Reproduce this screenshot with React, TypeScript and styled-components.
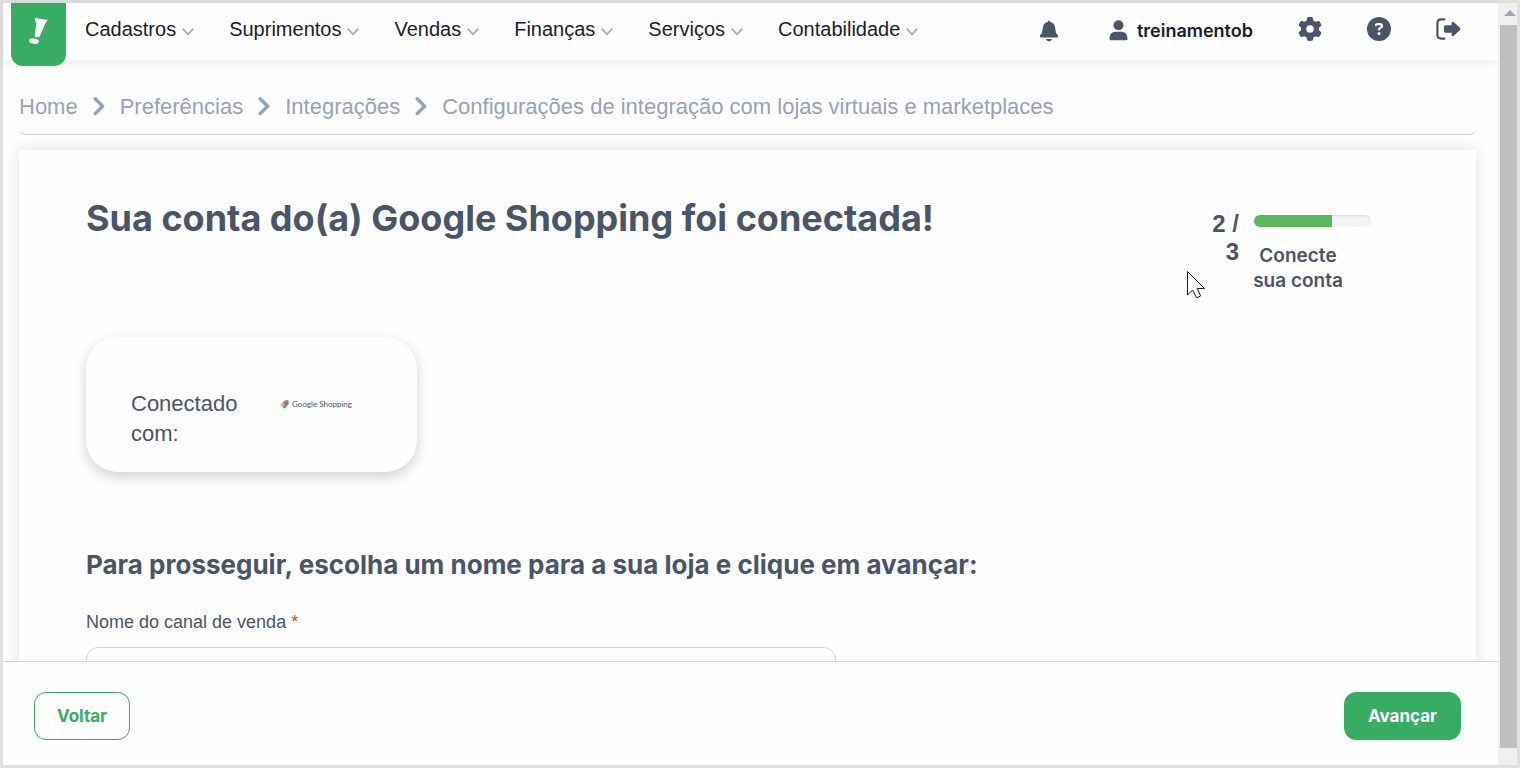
import React from 'react';
import styled, { createGlobalStyle } from 'styled-components';
import { FaGear, FaCircleQuestion } from 'react-icons/fa6';

const sans = '"Liberation Sans", Arial, sans-serif';
const display = 'Inter, "Open Sans", sans-serif';
const slate = '#4a5568';
const green = '#36ad62';

const GlobalStyle = createGlobalStyle`
  *, *::before, *::after { box-sizing: border-box; }
  body { margin: 0; background: #e0e0e0; font-family: ${sans}; color: ${slate}; }
  button, input { font: inherit; }
  h1, h2, p, ul, ol { margin: 0; padding: 0; }
  ul, ol { list-style: none; }
  a { color: inherit; text-decoration: none; }
`;

const Frame = styled.div`
  display: flex;
  height: 100vh;
  padding: 3px;
`;

const Page = styled.div`
  flex: 1;
  min-width: 0;
  display: flex;
  flex-direction: column;
  background: #fefefe;
`;

const TopBar = styled.header`
  display: flex;
  align-items: flex-start;
  flex: none;
  height: 57px;
  padding: 0 37px 0 8px;
  background: #fefefe;
  box-shadow: 0 2px 10px rgba(74, 85, 104, 0.12);
`;

const Logo = styled.a`
  display: flex;
  flex: none;
  justify-content: center;
  width: 55px;
  height: 63px;
  padding-top: 14px;
  border-radius: 0 0 12px 12px;
  background: ${green};
`;

const Menu = styled.ul`
  display: flex;
  gap: 35px;
  margin-left: 19px;
`;

const MenuButton = styled.button`
  display: flex;
  align-items: center;
  gap: 6px;
  height: 52px;
  padding: 0;
  border: 0;
  background: none;
  color: #1a202c;
  font-size: 20px;
  line-height: 24px;
  white-space: nowrap;

  svg { margin-top: 5px; }
`;

const Tools = styled.div`
  display: flex;
  align-items: center;
  gap: 45px;
  height: 52px;
  margin-left: auto;
`;

const ToolButton = styled.button`
  display: flex;
  align-items: center;
  gap: 9px;
  padding: 0;
  border: 0;
  background: none;
  color: ${slate};
`;

const AccountTools = styled.div`
  display: flex;
  align-items: center;
  gap: 50px;
  padding-top: 3px;
`;

const UserName = styled.span`
  color: #1a202c;
  font-family: ${display};
  font-size: 18px;
  font-weight: 600;
  line-height: 24px;
`;

const Content = styled.main`
  flex: 1;
  min-height: 0;
  overflow: hidden;
  padding: 19px 22px 0 16px;
`;

const Crumbs = styled.ol`
  display: flex;
  align-items: center;
  height: 56px;
  gap: 15px;
  border-bottom: 1px solid #cbd5e0;
  border-radius: 6px;
  color: #94a3b8;
  font-size: 22px;
  line-height: 28px;
  white-space: nowrap;
`;

const Crumb = styled.li`
  display: flex;
  align-items: center;
  gap: 15px;
`;

const Card = styled.section`
  margin-top: 15px;
  min-height: 100%;
  padding: 44px 105px 0 67px;
  background: #fefefe;
  box-shadow: 0 0 14px rgba(60, 70, 70, 0.16);
`;

const CardHead = styled.div`
  display: flex;
  justify-content: space-between;
`;

const Title = styled.h1`
  font-family: ${display};
  font-size: 36px;
  font-weight: 700;
  line-height: 48px;
`;

const Progress = styled.div`
  position: relative;
  display: flex;
  gap: 15px;
  padding-top: 16px;
`;

const StepCount = styled.p`
  width: 32px;
  font-size: 24px;
  font-weight: 700;
  line-height: 28px;
  text-align: right;
`;

const StepInfo = styled.div`
  width: 117px;
  padding-top: 5px;
`;

const Bar = styled.div`
  height: 12px;
  overflow: hidden;
  border-radius: 6px;
  background: #f3f4f4;
  box-shadow: inset 0 1px 2px rgba(0, 0, 0, 0.1);
`;

const BarFill = styled.div`
  height: 100%;
  background: #5cb85c;
`;

const StepLabel = styled.p`
  width: 96px;
  margin: 16px 0 0 -4px;
  font-family: ${display};
  font-size: 19px;
  font-weight: 600;
  line-height: 25px;
  text-align: center;
`;

const Cursor = styled.svg`
  position: absolute;
  left: -20px;
  top: 77px;
`;

const Connected = styled.div`
  display: flex;
  align-items: flex-start;
  justify-content: space-between;
  width: 331px;
  height: 135px;
  margin-top: 44px;
  padding: 52px 65px 0 45px;
  border-radius: 32px;
  background: #fefefe;
  box-shadow: 0 5px 14px rgba(0, 0, 0, 0.18);
  font-size: 22px;
  line-height: 30px;

  p { width: 110px; }
`;

const Brand = styled.span`
  display: flex;
  align-items: center;
  gap: 3px;
  margin-top: 10px;
  font-family: Lato, ${display};
  font-size: 8px;
  line-height: 10px;
  white-space: nowrap;
`;

const Subtitle = styled.h2`
  margin-top: 77px;
  font-family: ${display};
  font-size: 26px;
  font-weight: 700;
  line-height: 32px;
`;

const Field = styled.label`
  display: block;
  width: 750px;
  margin-top: 31px;
  font-size: 18px;
  line-height: 20px;

  em { color: #c05621; font-style: normal; }
`;

const TextInput = styled.input`
  display: block;
  width: 100%;
  height: 48px;
  margin-top: 15px;
  padding: 0 16px;
  border: 1px solid #cbd5e0;
  border-radius: 12px;
  background: #fefefe;
`;

const Footer = styled.footer`
  display: flex;
  flex: none;
  align-items: center;
  justify-content: space-between;
  padding: 30px 37px 25px 31px;
  border-top: 1px solid #d6d8da;
  background: #fefefe;
`;

const Action = styled.button<{ $primary?: boolean }>`
  height: 48px;
  padding: 0 ${(p) => (p.$primary ? 23 : 22)}px;
  border: 1px solid ${green};
  border-radius: 12px;
  background: ${(p) => (p.$primary ? green : '#fefefe')};
  color: ${(p) => (p.$primary ? '#fff' : green)};
  font-family: ${display};
  font-size: 17px;
  font-weight: 700;
`;

const ScrollTrack = styled.div`
  display: flex;
  flex-direction: column;
  flex: none;
  width: 19px;
  padding: 0 0 17px 2px;
  background: #f0f0f0;
`;

const ScrollArrow = styled.div`
  display: flex;
  justify-content: center;
  padding-top: 7px;
  padding-left: 3px;
  height: 22px;
`;

const ScrollThumb = styled.div`
  flex: 1;
  background: #bebfbe;
`;

const menu = ['Cadastros', 'Suprimentos', 'Vendas', 'Finanças', 'Serviços', 'Contabilidade'];
const crumbs = [
  'Home',
  'Preferências',
  'Integrações',
  'Configurações de integração com lojas virtuais e marketplaces',
];

const Chevron = () => (
  <svg width="12" height="8" viewBox="0 0 12 8" fill="none" stroke="#a0aec0" strokeWidth="1.7" strokeLinecap="round" strokeLinejoin="round">
    <path d="M1.2 1.2L6 6.3l4.8-5.1" />
  </svg>
);

const Separator = () => (
  <svg width="12" height="20" viewBox="0 0 12 20" fill="none" stroke="#94a3b8" strokeWidth="3.4" strokeLinecap="round" strokeLinejoin="round">
    <path d="M2.2 1.8L9.6 9.2L2.2 16.6" />
  </svg>
);

export default function App() {
  return (
    <Frame>
      <GlobalStyle />
      <Page>
        <TopBar>
          <Logo href="#" aria-label="Início">
            <svg width="21" height="30" viewBox="0 0 21 30" fill="#fff">
              <path d="M7.4 1L20 3.1L18 5.2L11.6 19.6Q9 21.2 6.6 19.4L8.4 5.3L6.6 3.6Z" />
              <ellipse cx="5.9" cy="24.2" rx="5" ry="2.7" transform="rotate(10 5.9 24.2)" />
            </svg>
          </Logo>
          <nav>
            <Menu>
              {menu.map((item) => (
                <li key={item}>
                  <MenuButton>{item}<Chevron /></MenuButton>
                </li>
              ))}
            </Menu>
          </nav>
          <Tools>
            <AccountTools>
              <ToolButton aria-label="Notificações">
                <svg width="20" height="22" viewBox="0 0 20 22" fill="currentColor">
                  <path d="M10 .4Q11.2 .4 11.2 2Q16 3 16.2 8.4Q16.3 13 19 15.4Q19.6 17.4 18 17.6H2Q.4 17.4 1 15.4Q3.7 13 3.8 8.4Q4 3 8.8 2Q8.8 .4 10 .4Z" />
                  <path d="M7 18.9H13Q12.4 21.2 10 21.2Q7.6 21.2 7 18.9Z" />
                </svg>
              </ToolButton>
              <ToolButton>
                <svg width="19" height="21" viewBox="0 0 19 21" fill="currentColor">
                  <circle cx="9.5" cy="5.2" r="5" />
                  <path d="M6.5 11.8H12.5Q18.2 12.2 18.5 18.2V19Q18.4 20.2 17.2 20.3H1.8Q.6 20.2 .5 19V18.2Q.8 12.2 6.5 11.8Z" />
                </svg>
                <UserName>treinamentob</UserName>
              </ToolButton>
            </AccountTools>
            <ToolButton aria-label="Configurações"><FaGear size={24} /></ToolButton>
            <ToolButton aria-label="Ajuda"><FaCircleQuestion size={24} /></ToolButton>
            <ToolButton aria-label="Sair">
              <svg width="25" height="22" viewBox="0 0 25 22" fill="currentColor">
                <path d="M8.4 1.4H5.2Q1.4 1.4 1.4 5.2V16.8Q1.4 20.6 5.2 20.6H8.4" fill="none" stroke="currentColor" strokeWidth="2.2" strokeLinecap="round" />
                <path d="M9.6 7.2H15.6V4.9Q16 3 17.6 4.1L24 9.8Q25 11 24 12.1L17.6 17.9Q16 19 15.6 17V14.8H9.6Q8 14.8 8 13.2V8.8Q8 7.2 9.6 7.2Z" />
              </svg>
            </ToolButton>
          </Tools>
        </TopBar>
        <Content>
          <Crumbs>
            {crumbs.map((crumb, i) => (
              <Crumb key={crumb}>
                {i > 0 && <Separator />}
                <a href="#">{crumb}</a>
              </Crumb>
            ))}
          </Crumbs>
          <Card>
            <CardHead>
              <Title>Sua conta do(a) Google Shopping foi conectada!</Title>
              <Progress>
                <StepCount>2 / 3</StepCount>
                <StepInfo>
                  <Bar><BarFill style={{ width: `${(2 / 3) * 100}%` }} /></Bar>
                  <StepLabel>Conecte sua conta</StepLabel>
                </StepInfo>
                <Cursor width="19" height="28" viewBox="0 0 19 28" fill="#fff" stroke="#1a1a2e" strokeWidth="1">
                  <path d="M.5 .5V24L5.7 19.2L9.5 26.8L13.6 25L10.3 17.5H17.5Z" />
                </Cursor>
              </Progress>
            </CardHead>
            <Connected>
              <p>Conectado com:</p>
              <Brand>
                <svg width="9" height="9" viewBox="0 0 9 9">
                  <path d="M4.6 .8L8.4 .3L8.7 4L4.4 8.5L.5 4.9Z" fill="#4285f4" />
                  <path d="M4.6 .8L8.4 .3L7.6 2L2.2 5L.5 4.9Z" fill="#ea6a50" />
                  <path d="M.5 4.9L2.7 3L5 5L3 7.2Z" fill="#fbbc55" />
                  <path d="M3 7.2L5 5.6L6.6 6.2L4.4 8.5Z" fill="#34a853" />
                </svg>
                Google Shopping
              </Brand>
            </Connected>
            <Subtitle>Para prosseguir, escolha um nome para a sua loja e clique em avançar:</Subtitle>
            <Field>
              Nome do canal de venda <em>*</em>
              <TextInput type="text" />
            </Field>
          </Card>
        </Content>
        <Footer>
          <Action>Voltar</Action>
          <Action $primary>Avançar</Action>
        </Footer>
      </Page>
      <ScrollTrack aria-hidden="true">
        <ScrollArrow>
          <svg width="12" height="6" viewBox="0 0 12 6" fill="#a0a6b4"><path d="M0 6L6 0l6 6z" /></svg>
        </ScrollArrow>
        <ScrollThumb />
      </ScrollTrack>
    </Frame>
  );
}
